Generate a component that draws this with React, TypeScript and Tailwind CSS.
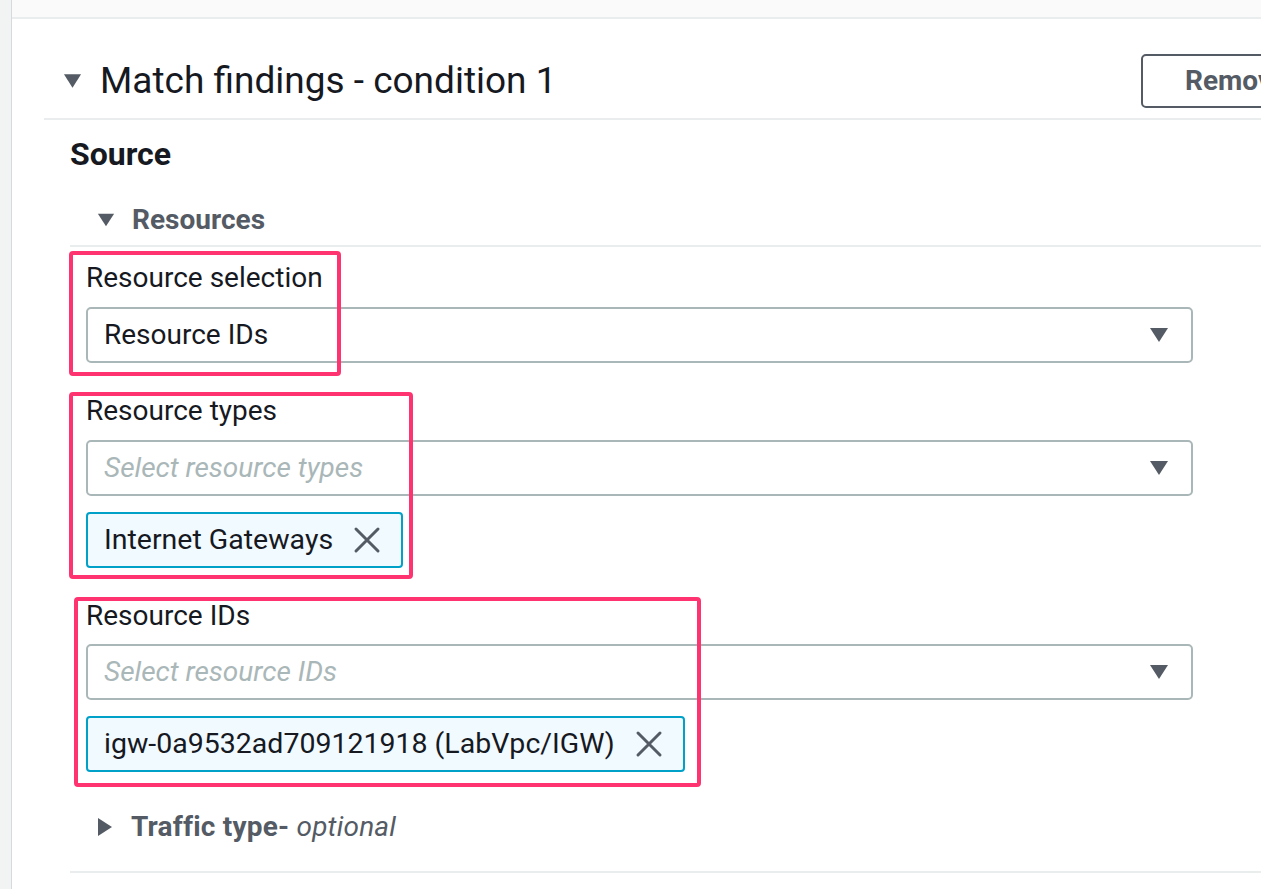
import React from 'react';

const font = { fontFamily: 'Roboto, "Noto Sans", sans-serif' };

function CaretDown({ className = '' }: { className?: string }) {
  return (
    <svg viewBox="0 0 20 16" className={className} fill="#545b64">
      <path d="M1 1h18L10 15z" />
    </svg>
  );
}

function CaretRight({ className = '' }: { className?: string }) {
  return (
    <svg viewBox="0 0 16 20" className={className} fill="#545b64">
      <path d="M1 1v18l14-9z" />
    </svg>
  );
}

function CloseIcon() {
  return (
    <svg viewBox="0 0 28 28" className="w-[28px] h-[28px]" stroke="#545b64" strokeWidth="3" strokeLinecap="round">
      <path d="M3 3l22 22M25 3L3 25" />
    </svg>
  );
}

function Select({ value, placeholder }: { value?: string; placeholder?: string }) {
  return (
    <div className="flex items-center justify-between w-[1107px] h-[56px] border-2 border-[#aab7b8] rounded-[5px] pl-[16px] pr-[22px]">
      {value ? (
        <span className="text-[28px] text-[#16191f]">{value}</span>
      ) : (
        <span className="text-[28px] italic text-[#aab7b8]">{placeholder}</span>
      )}
      <CaretDown className="w-[20px] h-[16px]" />
    </div>
  );
}

function Token({ label }: { label: string }) {
  return (
    <div className="inline-flex items-center gap-[20px] h-[56px] border-2 border-[#00a1c9] bg-[#f1faff] rounded-[4px] pl-[16px] pr-[20px]">
      <span className="text-[28.5px] text-[#16191f]">{label}</span>
      <CloseIcon />
    </div>
  );
}

export default function App() {
  return (
    <div className="relative flex w-[1261px] h-[889px] overflow-hidden bg-white" style={font}>
      <div className="w-[12px] shrink-0 bg-[#f2f3f3] border-r border-[#d5dbdb]" />
      <div className="flex-1 min-w-0 overflow-hidden">
        <div className="h-[19px] bg-[#fafafa] border-b-2 border-[#eaeded]" />
        <div className="ml-[32px] w-[1300px]">
          <div className="flex items-center pl-[19px] pt-[35px] pb-[10px] border-b-2 border-[#eaeded]">
            <CaretDown className="w-[19px] h-[16px]" />
            <h2 className="ml-[18px] text-[37px] text-[#16191f] leading-[44px]">Match findings - condition 1</h2>
            <button className="ml-auto mr-[33px] w-[170px] h-[54px] border-2 border-[#545b64] rounded-[5px] text-left pl-[42px] text-[28px] font-bold text-[#545b64]">
              Remove
            </button>
          </div>
          <div className="pl-[26px]">
            <h3 className="pt-[14px] text-[32px] font-bold text-[#16191f] leading-[40px]">Source</h3>
            <div className="flex items-center gap-[17px] pl-[27px] pt-[28px] pb-[7px] border-b-2 border-[#eaeded]">
              <CaretDown className="w-[18px] h-[16px]" />
              <span className="text-[28px] font-bold text-[#545b64] leading-[36px]">Resources</span>
            </div>
            <div className="pl-[16px] pt-[13px] flex flex-col">
              <label className="text-[28px] text-[#16191f] leading-[36px]">Resource selection</label>
              <div className="mt-[11px]">
                <Select value="Resource IDs" />
              </div>
              <label className="mt-[30px] text-[28px] text-[#16191f] leading-[36px]">Resource types</label>
              <div className="mt-[11px]">
                <Select placeholder="Select resource types" />
              </div>
              <div className="mt-[16px]">
                <Token label="Internet Gateways" />
              </div>
              <label className="mt-[30px] text-[28px] text-[#16191f] leading-[36px]">Resource IDs</label>
              <div className="mt-[10px]">
                <Select placeholder="Select resource IDs" />
              </div>
              <div className="mt-[16px]">
                <Token label="igw-0a9532ad709121918 (LabVpc/IGW)" />
              </div>
            </div>
            <div className="flex items-center gap-[18px] pl-[27px] pt-[37px] pb-[26px] border-b-2 border-[#eaeded]">
              <CaretRight className="w-[16px] h-[20px]" />
              <span className="text-[28px] font-bold text-[#545b64] leading-[36px] tracking-[0.2px]">
                Traffic type- <span className="italic font-normal">optional</span>
              </span>
            </div>
          </div>
        </div>
      </div>

      {/* annotation boxes */}
      <div className="absolute left-[69px] top-[251px] w-[272px] h-[125px] border-[4px] border-[#ff3370] rounded-[4px] pointer-events-none" />
      <div className="absolute left-[69px] top-[392px] w-[344px] h-[187px] border-[4px] border-[#ff3370] rounded-[4px] pointer-events-none" />
      <div className="absolute left-[74px] top-[597px] w-[627px] h-[190px] border-[4px] border-[#ff3370] rounded-[4px] pointer-events-none" />
    </div>
  );
}
